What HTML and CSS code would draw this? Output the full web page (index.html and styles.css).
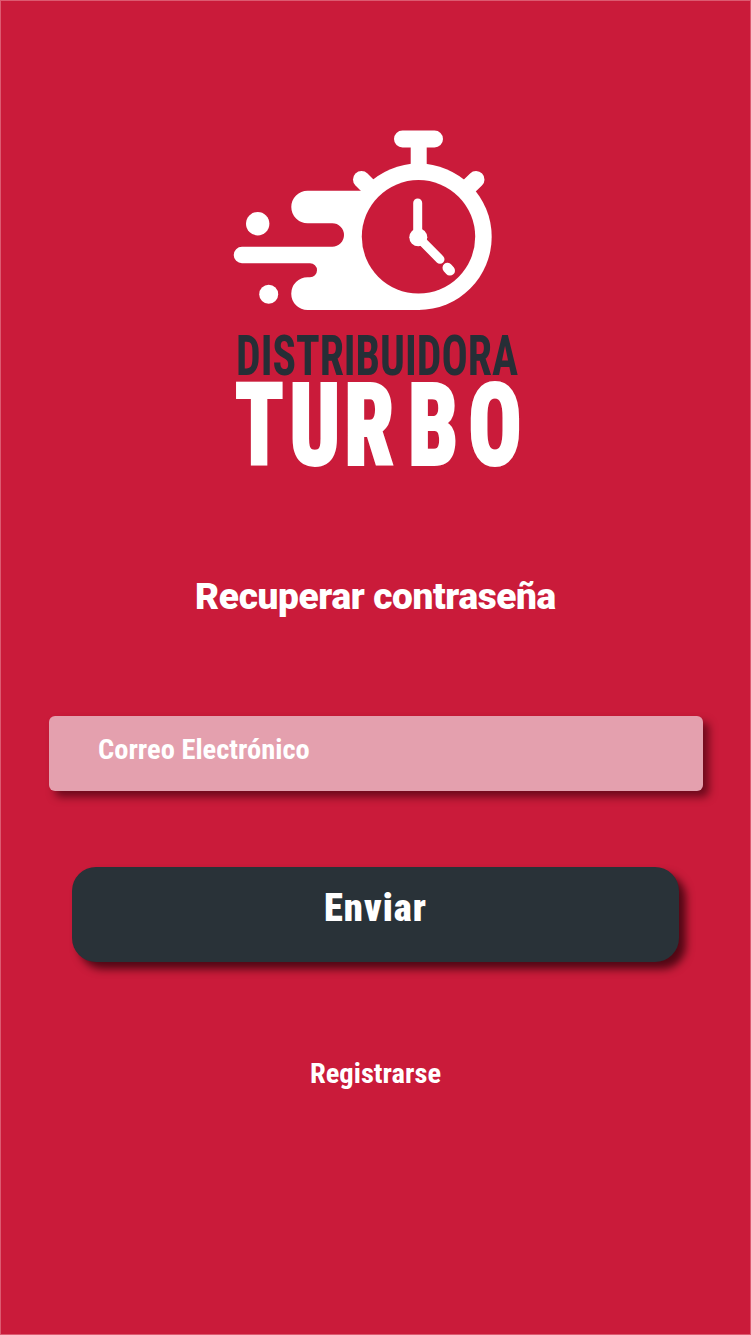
FILE: index.html
```html
<!DOCTYPE html>
<html lang="es">
<head>
    <meta charset="UTF-8">
    <meta name="viewport" content="width=device-width, initial-scale=1.0">
    <title>Recuperar contraseña</title>
    <link rel="stylesheet" href="styles.css">
</head>
<body>
    <div class="screen">
        <svg class="logo" viewBox="230 125 292 345" width="292" height="345">
            <!-- stopwatch -->
            <rect x="394" y="130.5" width="49" height="17" rx="8.5" fill="#fff"/>
            <rect x="410.7" y="140" width="16" height="30" fill="#fff"/>
            <line x1="361.5" y1="179.5" x2="376" y2="194" stroke="#fff" stroke-width="17" stroke-linecap="round"/>
            <line x1="476" y1="179.5" x2="461" y2="194" stroke="#fff" stroke-width="17" stroke-linecap="round"/>
            <path fill="#fff" d="M360 190.7H307.6A16.3 16.3 0 0 0 307.6 223.3H332.3A11.7 11.7 0 0 1 332.3 246.7H242A8.3 8.3 0 0 0 242 263.3H310A7 7 0 0 1 310 277.3H307.6A16.3 16.3 0 0 0 307.6 310H420V190.7Z"/>
            <circle cx="418.5" cy="236.8" r="73.2" fill="#fff"/>
            <circle cx="418.5" cy="236.8" r="56.7" fill="#ca1b3a"/>
            <circle cx="257.7" cy="223.7" r="11.7" fill="#fff"/>
            <circle cx="268.7" cy="294.3" r="9.5" fill="#fff"/>
            <line x1="417.7" y1="203" x2="417.7" y2="237" stroke="#fff" stroke-width="9" stroke-linecap="round"/>
            <circle cx="418.3" cy="237.3" r="9" fill="#fff"/>
            <line x1="418.3" y1="237.3" x2="440" y2="259.3" stroke="#fff" stroke-width="9" stroke-linecap="round"/>
            <line x1="447.5" y1="267.8" x2="450" y2="270.6" stroke="#fff" stroke-width="10" stroke-linecap="round"/>
            <!-- brand name -->
            <text class="logo-small" x="236" y="375" textLength="282" lengthAdjust="spacingAndGlyphs">DISTRIBUIDORA</text>
            <text class="logo-big" transform="scale(0.77 1)" x="305 375.5 447 530 608" y="465.5">TURBO</text>
        </svg>
        <h1 class="title">Recuperar contraseña</h1>
        <div class="field">Correo Electrónico</div>
        <button class="send">Enviar</button>
        <a class="register" href="#">Registrarse</a>
    </div>
</body>
</html>
```

FILE: styles.css
```css
* {
    box-sizing: border-box;
}
body {
    margin: 0;
    font-family: Roboto, "Liberation Sans", sans-serif;
    font-stretch: 75%;
}
.screen {
    width: 751px;
    height: 1335px;
    padding-top: 124px;
    display: flex;
    flex-direction: column;
    align-items: center;
    background-color: #ca1b3a;
    border: 1px solid #dc5a70;
    color: white;
}
.logo {
    display: block;
    margin-left: 1px;
    flex: none;
    overflow: visible;
}
.logo-small {
    font-weight: 700;
    font-size: 55px;
    fill: #262e36;
}
.logo-big {
    font-weight: 900;
    font-size: 115px;
    fill: white;
    stroke: white;
    stroke-width: 2px;
}
.title {
    margin: 105px 0 0;
    font-size: 37px;
    line-height: 44px;
    font-weight: 900;
    font-stretch: 89%;
    letter-spacing: -0.37px;
}
.field {
    width: 654px;
    height: 75px;
    margin-top: 97px;
    margin-left: 1px;
    padding: 16px 49px;
    background-color: #e4a0ae;
    border-radius: 6px;
    box-shadow: 6px 6px 8px rgba(60, 0, 12, 0.65);
    font-size: 28.5px;
    line-height: 36px;
    font-weight: 700;
}
.send {
    width: 607px;
    height: 95px;
    margin-top: 76px;
    padding: 0 0 14px;
    background-color: #293238;
    border: none;
    border-radius: 24px;
    box-shadow: 7px 7px 9px rgba(40, 0, 8, 0.75);
    color: white;
    font-family: inherit;
    font-stretch: 75%;
    letter-spacing: 1px;
    font-size: 38.5px;
    font-weight: 900;
}
.register {
    margin-top: 94px;
    font-size: 28.5px;
    line-height: 36px;
    font-weight: 700;
    color: white;
    text-decoration: none;
}
```
